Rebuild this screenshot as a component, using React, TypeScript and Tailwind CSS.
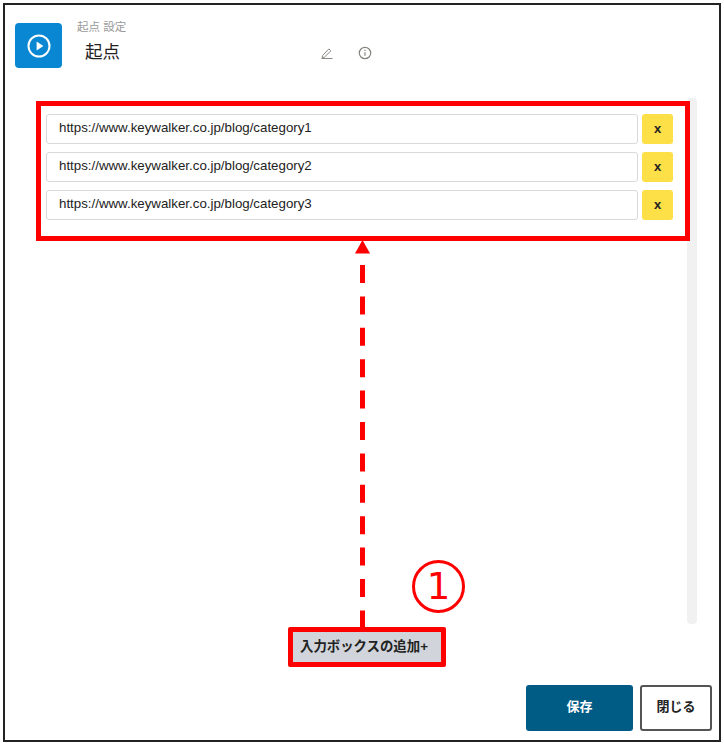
const font = "font-['Liberation_Sans','Noto_Sans_CJK_JP',sans-serif]";
const urls = [
  "https://www.keywalker.co.jp/blog/category1",
  "https://www.keywalker.co.jp/blog/category2",
  "https://www.keywalker.co.jp/blog/category3",
];

function PlayIcon() {
  return (
    <svg width="24" height="24" viewBox="0 0 24 24" fill="none">
      <circle cx="12" cy="12" r="10.5" stroke="white" strokeWidth="2" />
      <path d="M9.6 7.6v8.8l6.8-4.4z" fill="white" />
    </svg>
  );
}

function PencilIcon() {
  return (
    <svg width="12" height="12" viewBox="0 0 12 12" fill="none" stroke="#8a8a85" strokeWidth="1">
      <path d="M1.5 8.6 7.9 1.9l2 1.9-6.5 6.4-2.3.4z" />
      <path d="M.5 11.5h11" />
    </svg>
  );
}

function InfoIcon() {
  return (
    <svg width="14" height="14" viewBox="0 0 14 14" fill="none" stroke="#85857f" strokeWidth="1.2">
      <circle cx="7" cy="7" r="5.7" />
      <path d="M7 6.2v3.6" />
      <path d="M7 3.8v1.2" />
    </svg>
  );
}

export default function App() {
  return (
    <div className={`w-[724px] h-[743px] bg-white pl-[3px] pr-[3px] pt-[3px] pb-[1px] ${font}`}>
      <div className="relative w-[718px] h-[739px] border-2 border-[#222] flex flex-col">
        {/* header */}
        <div className="flex pl-[10px] pt-[15px] h-[96px] shrink-0">
          <div className="w-[47px] h-[45px] mt-[3px] rounded-[4px] bg-[#0a87d2] flex items-center justify-center">
            <PlayIcon />
          </div>
          <div className="ml-[15px] w-[244px]">
            <p className="text-[11.5px] leading-[14px] text-[#999]">起点 設定</p>
            <h1 className="ml-[8px] mt-[6px] text-[17.5px] leading-[24px] text-[#222]">起点</h1>
          </div>
          <div className="flex items-center gap-[25px] h-[14px] mt-[26px]">
            <PencilIcon />
            <InfoIcon />
          </div>
        </div>

        {/* scrollbar track */}
        <div className="absolute left-[682px] top-[93px] w-[10px] h-[526px] rounded-[4px] bg-[#f1f1f1]" />

        {/* url list */}
        <div className="relative ml-[31px] w-[654px] h-[140px] border-[5px] border-[#ff0000] bg-white pl-[5px] pr-[12px] pt-[8px] flex flex-col gap-[8px] shrink-0">
          {urls.map((url) => (
            <div key={url} className="flex gap-[4px]">
              <div className="w-[592px] h-[30px] rounded-[3px] border-[1.5px] border-[#d9d9d9] bg-white pl-[12px] pb-[2px] flex items-center text-[13.3px] text-[#222]">
                {url}
              </div>
              <button className="w-[31px] h-[30px] rounded-[3px] bg-[#fddf47] text-[13px] font-bold text-[#222]">
                x
              </button>
            </div>
          ))}
        </div>

        {/* annotation: arrow and number */}
        <svg className="absolute left-[346px] top-[234px]" width="24" height="392" viewBox="0 0 24 392">
          <path d="M11.5 1 19 14.5H4z" fill="#ff0000" />
          <path d="M11.5 26V389" stroke="#ff0000" strokeWidth="5" strokeDasharray="18 13.4" />
        </svg>
        <div className="absolute left-[407px] top-[555px] w-[53px] h-[53px] rounded-full border-[3px] border-[#ff0000] flex items-center justify-center text-[37px] leading-none text-[#ff0000] font-['DejaVu_Sans',sans-serif]">
          1
        </div>

        <div className="flex-1" />

        {/* add button */}
        <div className="flex justify-start pl-[283px] mb-[18px]">
          <button className="w-[158px] h-[40px] rounded-[2px] border-[5px] border-[#ff0000] bg-[#d1d5db] pr-[6px] text-[13.4px] font-bold text-[#222]">
            入力ボックスの追加+
          </button>
        </div>

        {/* footer */}
        <div className="flex justify-end gap-[7px] pr-[7px] pb-[9px]">
          <button className="w-[107px] h-[46px] rounded-[3px] bg-[#005b85] text-[13px] font-bold text-white pb-[2px]">
            保存
          </button>
          <button className="w-[72px] h-[46px] rounded-[3px] border-2 border-[#555] bg-white text-[13px] font-bold text-[#222] pb-[2px]">
            閉じる
          </button>
        </div>
      </div>
    </div>
  );
}
